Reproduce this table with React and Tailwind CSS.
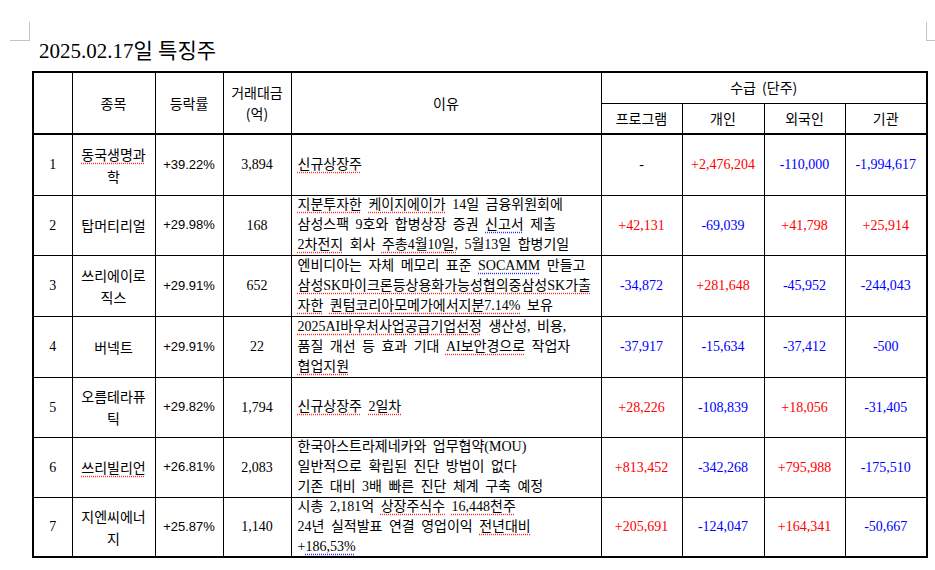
const R = ({ children }) => (
  <span className="underline decoration-dotted decoration-[#ff2a2a] underline-offset-[3px]">
    {children}
  </span>
);

const B = ({ children }) => (
  <span className="underline decoration-dotted decoration-[#2a2aff] underline-offset-[3px]">
    {children}
  </span>
);

const rows = [
  {
    no: "1",
    name: [<R key="a">동국생명과</R>, "학"],
    rate: "+39.22%",
    amount: "3,894",
    reason: [
      <>
        <R>신규상장주</R>
      </>,
    ],
    flow: ["-", "+2,476,204", "-110,000", "-1,994,617"],
    h: "h-[61px]",
  },
  {
    no: "2",
    name: ["탑머티리얼"],
    rate: "+29.98%",
    amount: "168",
    reason: [
      <>
        <R>지분투자한</R> <R>케이지에이가</R> 14일 금융위원회에
      </>,
      <>
        삼성스팩 9호와 합병상장 증권 <B>신고서</B> 제출
      </>,
      <>
        <R>2차전지</R> 회사 <R>주총4월10일,</R> 5월13일 합병기일
      </>,
    ],
    flow: ["+42,131", "-69,039", "+41,798", "+25,914"],
    h: "h-[60px]",
  },
  {
    no: "3",
    name: ["쓰리에이로", "직스"],
    rate: "+29.91%",
    amount: "652",
    reason: [
      <>
        엔비디아는 자체 메모리 표준 <B>SOCAMM</B> 만들고
      </>,
      <>
        <R>삼성SK마이크론등상용화가능성협의중삼성SK가출</R>
      </>,
      <>
        <R>자한</R> <R>퀀텀코리아모메가에서지분7.14%</R> 보유
      </>,
    ],
    flow: ["-34,872", "+281,648", "-45,952", "-244,043"],
    h: "h-[61px]",
  },
  {
    no: "4",
    name: ["버넥트"],
    rate: "+29.91%",
    amount: "22",
    reason: [
      <>
        <R>2025AI바우처사업공급기업선정</R> 생산성, 비용,
      </>,
      <>
        품질 개선 등 효과 기대 <R>AI보안경으로</R> 작업자
      </>,
      <>
        <R>협업지원</R>
      </>,
    ],
    flow: ["-37,917", "-15,634", "-37,412", "-500"],
    h: "h-[61px]",
  },
  {
    no: "5",
    name: ["오름테라퓨", "틱"],
    rate: "+29.82%",
    amount: "1,794",
    reason: [
      <>
        <R>신규상장주</R> <R>2일차</R>
      </>,
    ],
    flow: ["+28,226", "-108,839", "+18,056", "-31,405"],
    h: "h-[60px]",
  },
  {
    no: "6",
    name: [<R key="a">쓰리빌리언</R>],
    rate: "+26.81%",
    amount: "2,083",
    reason: [
      <>한국아스트라제네카와 업무협약(MOU)</>,
      <>일반적으로 확립된 진단 방법이 없다</>,
      <>기존 대비 3배 빠른 진단 체계 구축 예정</>,
    ],
    flow: ["+813,452", "-342,268", "+795,988", "-175,510"],
    h: "h-[60px]",
  },
  {
    no: "7",
    name: ["지엔씨에너", "지"],
    rate: "+25.87%",
    amount: "1,140",
    reason: [
      <>
        시총 2,181억 <R>상장주식수</R> <R>16,448천주</R>
      </>,
      <>
        24년 실적발표 연결 영업이익 <R>전년대비</R>
      </>,
      <>
        +<B>186,53%</B>
      </>,
    ],
    flow: ["+205,691", "-124,047", "+164,341", "-50,667"],
    h: "h-[60px]",
  },
];

const flowColor = (v) => {
  if (v.startsWith("+")) return "text-[#ff0000]";
  if (v.length > 1) return "text-[#0000ff]";
  return "text-black";
};

const cell = "border border-black px-[5px] py-0 text-center align-middle";
const head =
  "border border-black px-[4px] py-0 text-center align-middle font-normal text-[14px] leading-[21px] [word-spacing:3px]";
const serif = "font-['Liberation_Serif','Noto_Sans_CJK_KR',serif] text-[14px]";

export default function App() {
  return (
    <div className="w-[935px] h-[570px] bg-white overflow-hidden font-['Noto_Sans_CJK_KR',sans-serif] text-black">
      <div className="pt-[22px] flex justify-between">
        <div className="ml-[10px] w-[20px] h-[19px] border-r border-b border-[#c4c4c4]" />
        <div className="w-[9px] h-[19px] border-l border-b border-[#c4c4c4]" />
      </div>

      <h1 className="mt-0 ml-[39px] text-[21px] leading-[20px] font-normal font-['Liberation_Serif','Noto_Sans_CJK_KR',serif]">
        2025.02.17일 특징주
      </h1>

      <table className="ml-[32px] mt-[10px] w-[894px] table-fixed border-collapse border-2 border-black">
        <colgroup>
          <col className="w-[39px]" />
          <col className="w-[83px]" />
          <col className="w-[68px]" />
          <col className="w-[68px]" />
          <col className="w-[310px]" />
          <col className="w-[81px]" />
          <col className="w-[82px]" />
          <col className="w-[81px]" />
          <col className="w-[82px]" />
        </colgroup>
        <thead>
          <tr className="h-[31px]">
            <th rowSpan={2} className={`${head} border-b-2`} />
            <th rowSpan={2} className={`${head} border-b-2`}>
              종목
            </th>
            <th rowSpan={2} className={`${head} border-b-2`}>
              등락률
            </th>
            <th rowSpan={2} className={`${head} border-b-2`}>
              거래대금
              <br />
              (억)
            </th>
            <th rowSpan={2} className={`${head} border-b-2`}>
              이유
            </th>
            <th colSpan={4} className={head}>
              수급 (단주)
            </th>
          </tr>
          <tr className="h-[31px]">
            <th className={`${head} border-b-2`}>프로그램</th>
            <th className={`${head} border-b-2`}>개인</th>
            <th className={`${head} border-b-2`}>외국인</th>
            <th className={`${head} border-b-2`}>기관</th>
          </tr>
        </thead>
        <tbody>
          {rows.map((row) => (
            <tr key={row.no} className={row.h}>
              <td className={`${cell} ${serif}`}>{row.no}</td>
              <td className={`${cell} text-[14px] leading-[22px]`}>
                {row.name.map((part, i) => (
                  <div key={i}>{part}</div>
                ))}
              </td>
              <td className={`${cell} font-['Liberation_Sans',sans-serif] text-[13px]`}>
                {row.rate}
              </td>
              <td className={`${cell} ${serif}`}>{row.amount}</td>
              <td className="border border-black pl-[6px] pr-[2px] py-0 align-middle text-left text-[14px] leading-[20px] [word-spacing:3px] whitespace-nowrap font-['Liberation_Serif','Noto_Sans_CJK_KR',serif]">
                <div className="h-[56px] flex flex-col justify-center">
                  {row.reason.map((line, i) => (
                    <div key={i}>{line}</div>
                  ))}
                </div>
              </td>
              {row.flow.map((v, i) => (
                <td key={i} className={`${cell} ${serif} ${flowColor(v)}`}>
                  {v}
                </td>
              ))}
            </tr>
          ))}
        </tbody>
      </table>
    </div>
  );
}
